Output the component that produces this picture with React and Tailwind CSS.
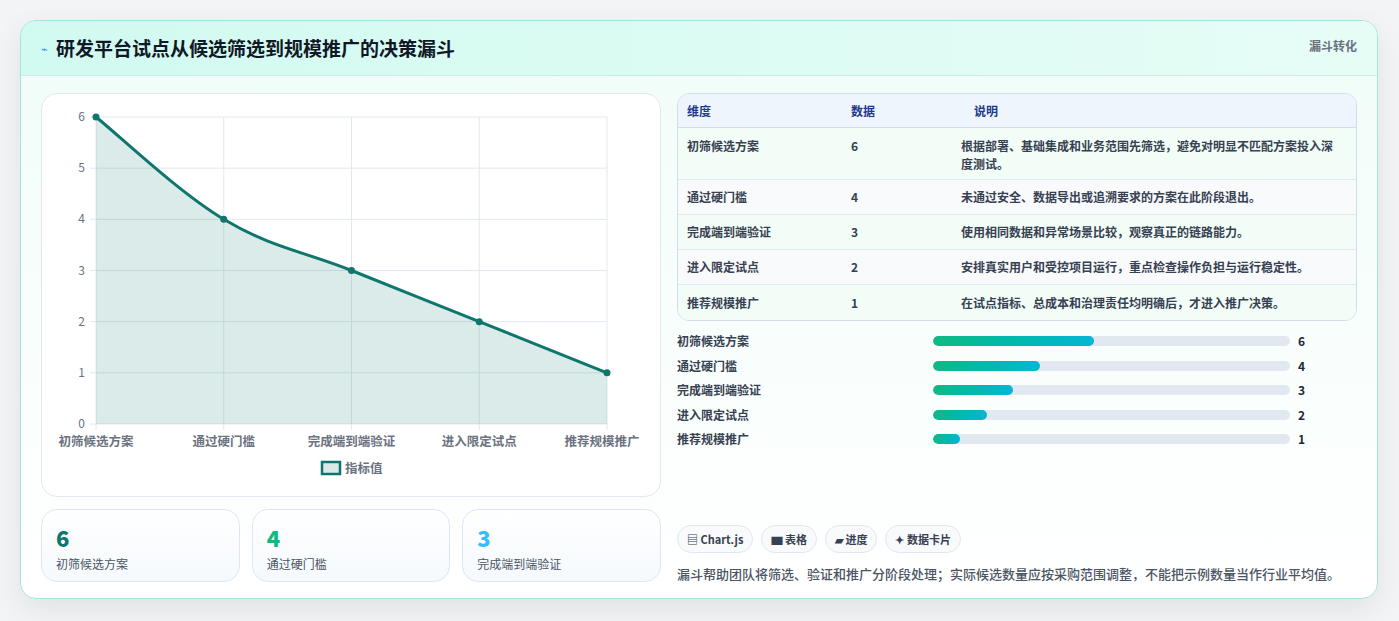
const rows = [
  ["初筛候选方案", 6, "根据部署、基础集成和业务范围先筛选，避免对明显不匹配方案投入深度测试。"],
  ["通过硬门槛", 4, "未通过安全、数据导出或追溯要求的方案在此阶段退出。"],
  ["完成端到端验证", 3, "使用相同数据和异常场景比较，观察真正的链路能力。"],
  ["进入限定试点", 2, "安排真实用户和受控项目运行，重点检查操作负担与运行稳定性。"],
  ["推荐规模推广", 1, "在试点指标、总成本和治理责任均明确后，才进入推广决策。"],
];

function Chart() {
  const L = 54, R = 565, T = 23, B = 330;
  const xs = [0, 1, 2, 3, 4].map(i => L + (i * (R - L)) / 4);
  const y = v => B - (v * (B - T)) / 6;
  const pts = rows.map((r, i) => [xs[i], y(r[1])]);
  let d = `M${pts[0][0]},${pts[0][1]}`;
  for (let i = 0; i < pts.length - 1; i++) {
    const p0 = pts[Math.max(0, i - 1)], p1 = pts[i], p2 = pts[i + 1], p3 = pts[Math.min(pts.length - 1, i + 2)];
    const t = 0.18;
    const c1 = [p1[0] + (p2[0] - p0[0]) * t, p1[1] + (p2[1] - p0[1]) * t];
    const c2 = [p2[0] - (p3[0] - p1[0]) * t, p2[1] - (p3[1] - p1[1]) * t];
    d += ` C${c1[0]},${c1[1]} ${c2[0]},${c2[1]} ${p2[0]},${p2[1]}`;
  }
  const area = d + ` L${R},${B} L${L},${B} Z`;
  return (
    <svg width="619" height="404" className="block">
      {[0, 1, 2, 3, 4, 5, 6].map(v => (
        <g key={v}>
          <line x1={L - 6} x2={R} y1={y(v)} y2={y(v)} stroke="#e2e8f0" />
          <text x={L - 11} y={y(v) + 4} textAnchor="end" fontSize="12" fill="#6b7280">{v}</text>
        </g>
      ))}
      {xs.map((x, i) => (
        <g key={i}>
          <line x1={x} x2={x} y1={T} y2={B + 6} stroke="#e2e8f0" />
          <text x={i === 0 ? x + 0 : i === 4 ? x - 5 : x} y={B + 22} textAnchor="middle" fontSize="12.5" fill="#6b7280" fontWeight="600">{rows[i][0]}</text>
        </g>
      ))}
      <path d={area} fill="rgba(15,118,110,0.15)" />
      <path d={d} fill="none" stroke="#0f766e" strokeWidth="3" />
      {pts.map((p, i) => <circle key={i} cx={p[0]} cy={p[1]} r="3.5" fill="#0f766e" />)}
      <rect x="280" y="368" width="18" height="12" fill="#dbeae8" stroke="#0f766e" strokeWidth="2.5" />
      <text x="303" y="379" fontSize="12.5" fill="#6b7280" fontWeight="600">指标值</text>
    </svg>
  );
}

export default function App() {
  return (
    <div className="min-h-[621px] bg-[#f3f4f6] pt-5 px-5" style={{ fontFamily: '"Noto Sans CJK SC", "Noto Sans", sans-serif' }}>
      <div className="w-[1358px] h-[579px] rounded-2xl border border-[#a7e3de] bg-gradient-to-b from-[#f0fdf8] to-white shadow-[0_10px_30px_rgba(0,0,0,0.08)] overflow-hidden">
        <div className="h-[55px] flex items-center justify-between px-5 bg-gradient-to-r from-[#d1faf0] to-[#e6fdf6] border-b border-[#cdeee6]">
          <div className="flex items-center gap-2">
            <span className="text-[#3b82f6] text-[11px]">⌁</span>
            <h1 className="text-[19px] font-bold text-[#111827]">研发平台试点从候选筛选到规模推广的决策漏斗</h1>
          </div>
          <span className="text-[12px] font-bold text-[#6b7280] self-start mt-[16px]">漏斗转化</span>
        </div>
        <div className="flex gap-4 px-5 pt-[17px]">
          <div className="w-[620px] flex flex-col gap-3">
            <div className="h-[404px] rounded-2xl border border-[#e2e8f0] bg-white overflow-hidden"><Chart /></div>
            <div className="grid grid-cols-3 gap-3">
              {[[6, "text-[#0f766e]"], [4, "text-[#10b981]"], [3, "text-[#38bdf8]"]].map(([n, c], i) => (
                <div key={i} className="h-[73px] rounded-2xl border border-[#dbe7f3] bg-gradient-to-b from-white to-[#f5f9fd] px-[14px] pt-[12px]">
                  <div className={`text-[22px] font-extrabold leading-[30px] ${c}`}>{n}</div>
                  <div className="text-[12px] text-[#4b5563] mt-[3px]">{rows[i][0]}</div>
                </div>
              ))}
            </div>
          </div>
          <div className="w-[685px] flex flex-col">
            <div className="rounded-xl border border-[#d3dde9] overflow-hidden text-[12px] font-semibold text-[#374151]">
              <div className="h-[34px] flex items-center bg-[#eef5fd] border-b border-[#d3dde9] text-[#1e3a8a]">
                <div className="w-[173px] pl-[9px]">维度</div><div className="w-[123px]">数据</div><div>说明</div>
              </div>
              {rows.map((r, i) => (
                <div key={i} className={`flex ${i === 0 ? "h-[52px] items-start pt-[9px]" : "h-[35px] items-center"} ${i % 2 ? "bg-[#f8fafc]" : "bg-[#f3fdf8]"} ${i < 4 ? "border-b border-[#e2e8f0]" : ""}`}>
                  <div className="w-[173px] pl-[9px] shrink-0">{r[0]}</div>
                  <div className="w-[110px] shrink-0">{r[1]}</div>
                  <div className="pr-3 leading-[18px]">{r[2]}</div>
                </div>
              ))}
            </div>
            <div className="flex flex-col gap-[10.5px] mt-[13px]">
              {rows.map((r, i) => (
                <div key={i} className="flex items-center h-[14px] text-[12px] font-semibold text-[#374151]">
                  <div className="w-[256px]">{r[0]}</div>
                  <div className="w-[357px] h-[10px] rounded-full bg-[#e2e8f0] overflow-hidden">
                    <div className="h-full rounded-full bg-gradient-to-r from-[#10b981] to-[#06b6d4]" style={{ width: `${(r[1] / 6) * 45}%` }} />
                  </div>
                  <div className="ml-2 font-bold text-[#1f2937]">{r[1]}</div>
                </div>
              ))}
            </div>
            <div className="flex gap-2 mt-[79px]">
              {["▤ Chart.js", "▆ 表格", "▰ 进度", "✦ 数据卡片"].map(t => (
                <span key={t} className="h-[28px] px-[9px] flex items-center rounded-full border border-[#e2e8f0] bg-[#f8fafc] text-[11px] font-semibold text-[#374151]">{t}</span>
              ))}
            </div>
            <p className="mt-[11px] text-[13px] font-medium text-[#4b5563]">漏斗帮助团队将筛选、验证和推广分阶段处理；实际候选数量应按采购范围调整，不能把示例数量当作行业平均值。</p>
          </div>
        </div>
      </div>
    </div>
  );
}
